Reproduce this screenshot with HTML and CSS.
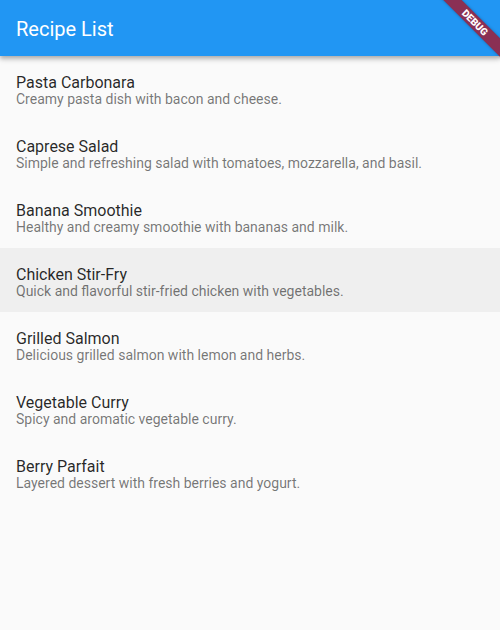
FILE: index.html
```html
<!DOCTYPE html>
<html>
<head>
<meta charset="utf-8">
<link rel="stylesheet" href="styles.css">
</head>
<body>
<div class="app">
  <header class="appbar"><h1 class="title">Recipe List</h1></header>
  <ul class="list">
    <li class="tile"><div class="t">Pasta Carbonara</div><div class="s">Creamy pasta dish with bacon and cheese.</div></li>
    <li class="tile"><div class="t">Caprese Salad</div><div class="s">Simple and refreshing salad with tomatoes, mozzarella, and basil.</div></li>
    <li class="tile"><div class="t">Banana Smoothie</div><div class="s">Healthy and creamy smoothie with bananas and milk.</div></li>
    <li class="tile hover"><div class="t">Chicken Stir-Fry</div><div class="s">Quick and flavorful stir-fried chicken with vegetables.</div></li>
    <li class="tile"><div class="t">Grilled Salmon</div><div class="s">Delicious grilled salmon with lemon and herbs.</div></li>
    <li class="tile"><div class="t">Vegetable Curry</div><div class="s">Spicy and aromatic vegetable curry.</div></li>
    <li class="tile"><div class="t">Berry Parfait</div><div class="s">Layered dessert with fresh berries and yogurt.</div></li>
  </ul>
  <div class="banner"><span>DEBUG</span></div>
</div>
</body>
</html>
```
FILE: styles.css
```css
html, body { margin: 0; padding: 0; }
body { background: #fafafa; font-family: Roboto, "Noto Sans", sans-serif; }
.app { position: relative; width: 500px; height: 630px; overflow: hidden; background: #fafafa; }
.appbar {
  height: 56px; background: #2196f3; display: flex; align-items: center;
  padding: 0 16px; box-sizing: border-box;
  box-shadow: 0 2px 4px rgba(0,0,0,0.2), 0 4px 5px rgba(0,0,0,0.14);
  position: relative; z-index: 1;
}
.title { margin: 0; font-size: 20px; font-weight: 400; color: #fff; padding-top: 1px; }
.list { list-style: none; margin: 0; padding: 0; }
.tile { height: 64px; box-sizing: border-box; padding: 18px 16px 0; }
.tile.hover { background: #efefef; }
.t { font-size: 16px; line-height: 18px; color: rgba(0,0,0,0.85); }
.s { font-size: 14px; line-height: 14px; color: rgba(0,0,0,0.54); }
.banner {
  position: absolute; z-index: 2; left: 415px; top: 16px; width: 120px; height: 13px;
  background: #8a3054; transform: rotate(45deg);
  display: flex; align-items: center; justify-content: center;
  box-shadow: 0 0 3px rgba(0,0,0,0.3);
}
.banner span { color: #fff; font-size: 10px; font-weight: 900; line-height: 12px; }
```
